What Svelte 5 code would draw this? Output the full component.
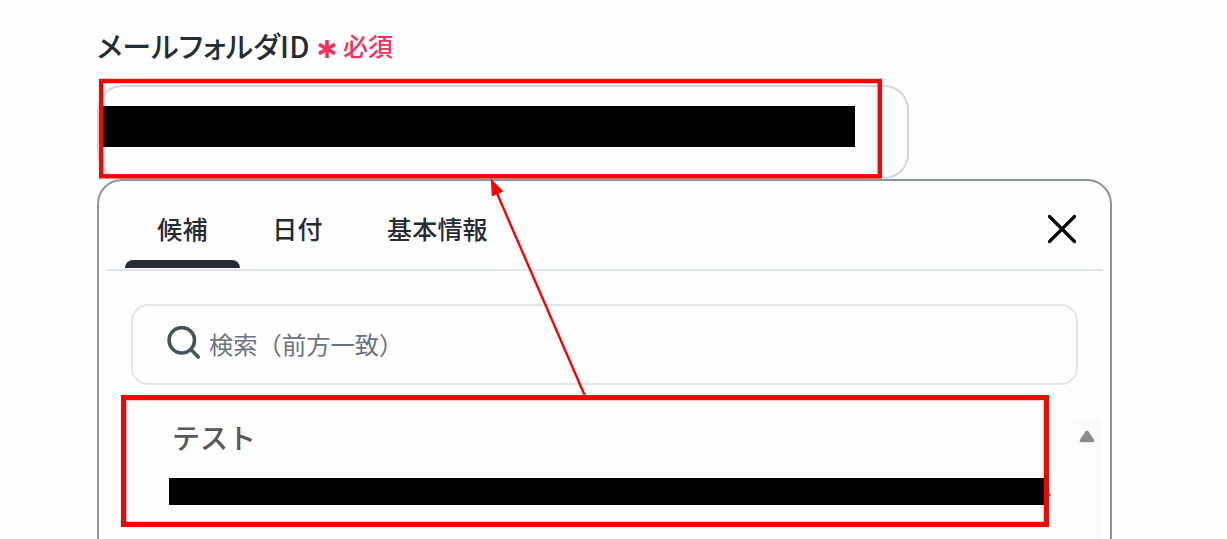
<script>
	let activeTab = '候補';
	let open = true;
	let query = '';

	const tabs = ['候補', '日付', '基本情報'];
	const suggestions = [{ name: 'テスト' }];

	function selectTab(tab) {
		activeTab = tab;
	}
</script>

<main class="page">
	<div class="label">
		<span class="name">メールフォルダID</span>
		<svg class="asterisk" viewBox="0 0 18 20">
			<path d="M9 1V19M1 5.4L17 14.6M17 5.4L1 14.6" />
		</svg>
		<span class="required">必須</span>
	</div>

	<div class="field">
		<div class="masked-value"></div>
	</div>

	{#if open}
		<section class="panel">
			<header class="tabs">
				{#each tabs as tab}
					<button class="tab" class:active={tab === activeTab} on:click={() => selectTab(tab)}>
						<span>{tab}</span>
					</button>
				{/each}
				<button class="close" aria-label="閉じる" on:click={() => (open = false)}>
					<svg viewBox="0 0 30 30">
						<path d="M2.5 2.5L27.5 27.5M27.5 2.5L2.5 27.5" />
					</svg>
				</button>
			</header>

			<label class="search">
				<svg viewBox="0 0 34 34">
					<circle cx="14.8" cy="14.3" r="12.7" />
					<path d="M24 23.5L31.3 31" />
				</svg>
				<input type="text" placeholder="検索（前方一致）" bind:value={query} />
			</label>

			<div class="results">
				<div class="list">
					{#each suggestions as item}
						<div class="item">
							<div class="title">{item.name}</div>
							<div class="masked-id"></div>
						</div>
					{/each}
				</div>
				<div class="scrollbar">
					<svg viewBox="0 0 16 13">
						<path d="M8 2.5L13.5 10.5H2.5Z" />
					</svg>
				</div>
			</div>
		</section>
	{/if}

	<!-- callouts linking the picked suggestion to the field -->
	<svg class="callouts" viewBox="0 0 1227 539">
		<rect x="101.2" y="81" width="778.6" height="95.3" stroke-width="4.4" />
		<rect x="123.6" y="397.6" width="922.8" height="126.8" stroke-width="5.2" />
		<path d="M585 396L496 191" stroke-width="2.4" />
		<path class="head" d="M490.8 178.5L503.5 191.5L491.8 196.5Z" />
		<circle class="dot" cx="1050" cy="495" r="1.2" />
	</svg>
</main>

<style>
	:global(body) {
		background: #fefefe;
	}
	.page {
		position: relative;
		box-sizing: border-box;
		width: 1227px;
		height: 539px;
		padding: 26px 0 0 97px;
		overflow: hidden;
		font-family: 'Noto Sans CJK JP', sans-serif;
		color: #252c33;
	}
	.label {
		display: flex;
		align-items: center;
		height: 40px;
		margin-bottom: 19px;
		font-weight: 500;
		line-height: 40px;
		white-space: nowrap;
	}
	.name {
		width: 221px;
		margin-top: -2px;
		font-size: 29px;
		letter-spacing: 0.2px;
		font-feature-settings: 'palt';
	}
	.asterisk {
		width: 18px;
		height: 20px;
		margin: 6px 7px 0 0;
		fill: none;
		stroke: #f3305e;
		stroke-width: 3.6;
	}
	.required {
		margin-top: -3px;
		font-size: 25px;
		color: #f3305e;
	}
	.field {
		box-sizing: border-box;
		width: 812px;
		height: 94px;
		padding: 19px 0 0 4px;
		border: 2px solid #d2d7de;
		border-radius: 25px;
	}
	.masked-value {
		width: 752px;
		height: 41px;
		background: #000;
	}
	.panel {
		box-sizing: border-box;
		width: 1015px;
		height: 400px;
		border: 2px solid #8d939b;
		border-radius: 25px;
	}
	.tabs {
		display: flex;
		height: 90px;
		margin: 0 7px;
		padding-left: 19px;
		box-sizing: border-box;
		border-bottom: 2px solid #e0e5eb;
	}
	button {
		padding: 0;
		border: 0;
		background: none;
		font: inherit;
		color: inherit;
		cursor: pointer;
	}
	.tab {
		display: flex;
		flex-direction: column;
		align-items: center;
		height: 87px;
		padding: 29px 32px 0;
		font-size: 25px;
		font-weight: 500;
		line-height: 37px;
		letter-spacing: 0.2px;
	}
	.tab::after {
		content: '';
		width: 115px;
		height: 8px;
		margin: 13px -32px 0;
		border-radius: 8px 8px 0 0;
	}
	.tab.active::after {
		background: #252c33;
	}
	.close {
		width: 30px;
		height: 30px;
		margin: 33px 26px 0 auto;
	}
	.close svg {
		display: block;
		fill: none;
		stroke: #000;
		stroke-width: 3.2;
		stroke-linecap: round;
	}
	.search {
		display: flex;
		align-items: center;
		box-sizing: border-box;
		width: 947px;
		height: 81px;
		margin: 33px 0 0 32px;
		padding-left: 34px;
		border: 2px solid #e1e6ec;
		border-radius: 17px;
	}
	.search svg {
		width: 34px;
		height: 34px;
		margin: 0 8px 4px 0;
		fill: none;
		stroke: #47515b;
		stroke-width: 3.6;
		stroke-linecap: round;
	}
	input {
		width: 700px;
		margin-top: -2px;
		padding: 0;
		border: 0;
		outline: 0;
		background: none;
		font-family: inherit;
		font-size: 24.3px;
		color: #47515b;
	}
	input::placeholder {
		color: #6b7280;
		opacity: 1;
	}
	.results {
		display: flex;
		justify-content: space-between;
		height: 150px;
		margin: 33px 8px 0 70px;
	}
	.title {
		height: 41px;
		padding-left: 3px;
		font-size: 28px;
		font-weight: 500;
		line-height: 39px;
		color: #585858;
	}
	.masked-id {
		width: 877px;
		height: 27px;
		margin-top: 19px;
		background: #000;
	}
	.scrollbar {
		display: flex;
		justify-content: center;
		width: 30px;
		background: #fbfbfb;
	}
	.scrollbar svg {
		width: 16px;
		height: 13px;
		margin-top: 12px;
		fill: #8b8b8b;
		stroke: #8b8b8b;
		stroke-width: 3.6;
		stroke-linejoin: round;
	}
	.callouts {
		position: absolute;
		top: 0;
		left: 0;
		width: 1227px;
		height: 539px;
		pointer-events: none;
		fill: none;
		stroke: #f00;
	}
	.callouts .head {
		fill: #f00;
		stroke: none;
	}
	.callouts .dot {
		fill: #777;
		stroke: none;
	}
</style>
